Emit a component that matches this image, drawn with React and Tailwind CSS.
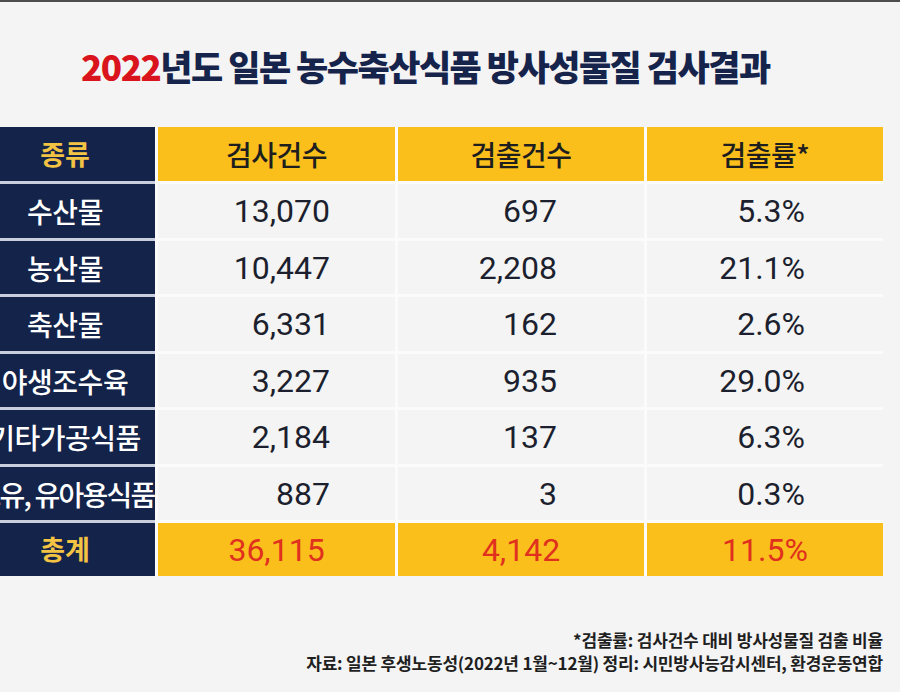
import React from "react";

const rows = [
  { name: "수산물", a: "13,070", b: "697", c: "5.3%", t: "tracking-[-0.5px]" },
  { name: "농산물", a: "10,447", b: "2,208", c: "21.1%", t: "tracking-[-0.5px]" },
  { name: "축산물", a: "6,331", b: "162", c: "2.6%", t: "tracking-[-0.5px]" },
  { name: "야생조수육", a: "3,227", b: "935", c: "29.0%", t: "tracking-[-0.5px]" },
  { name: "기타가공식품", a: "2,184", b: "137", c: "6.3%", t: "tracking-[-0.5px]" },
  { name: "모유, 유아용식품", a: "887", b: "3", c: "0.3%", t: "tracking-[-1.8px]" },
];

const heights = ["h-[54px]", "h-[54px]", "h-[53px]", "h-[54px]", "h-[53px]", "h-[54px]", "h-[53px]"];

const numCls = "font-['Roboto','Noto_Sans_CJK_KR',sans-serif] text-[32px] text-[#1c1f2e] bg-[#f4f4f4] flex items-center justify-end";

export default function App() {
  return (
    <div className="w-[900px] h-[692px] overflow-hidden bg-[#f4f4f4] border-t-2 border-[#4d4d4d] font-['Noto_Sans_CJK_KR','Noto_Sans',sans-serif]">
      <div className="pt-[44px] pl-[81px] h-[86px] text-[35px] leading-[40px] font-black text-[#16244c] tracking-[-1.5px] whitespace-nowrap">
        <span className="text-[#d9141d]">2022</span>년도 일본 농수축산식품 방사성물질 검사결과
      </div>

      <div className="mt-[39px] ml-[-25px] flex gap-[3px] bg-[#fbfbfb] w-[908px]">
        <div className="w-[180px] flex flex-col gap-[3px] bg-[#c9cedd]">
          <div className="h-[54px] bg-[#13234a] flex items-center justify-center text-[27px] font-bold text-[#f3c343]">
            종류
          </div>
          {rows.map((r, i) => (
            <div
              key={r.name}
              className={`${heights[i + 1]} ${r.t} bg-[#13234a] flex items-center justify-center text-[28px] font-medium text-white whitespace-nowrap`}
            >
              {r.name}
            </div>
          ))}
          <div className="h-[53px] bg-[#13234a] flex items-center justify-center text-[27px] font-bold text-[#f3c343]">
            총계
          </div>
        </div>

        <div className="grid grid-cols-[237px_246px_236px] gap-[3px]">
          {["검사건수", "검출건수", "검출률*"].map((h) => (
            <div
              key={h}
              className="h-[54px] bg-[#fbbf1c] flex items-center justify-center text-[28px] font-medium text-[#1e1e1e] tracking-[-0.5px]"
            >
              {h}
            </div>
          ))}
          {rows.map((r, i) => (
            <React.Fragment key={r.name}>
              <div className={`${heights[i + 1]} ${numCls} pr-[65px]`}>{r.a}</div>
              <div className={`${heights[i + 1]} ${numCls} pr-[87px]`}>{r.b}</div>
              <div className={`${heights[i + 1]} ${numCls} pr-[78px]`}>{r.c}</div>
            </React.Fragment>
          ))}
          {["36,115", "4,142", "11.5%"].map((t) => (
            <div
              key={t}
              className="h-[53px] bg-[#fbbf1c] flex items-center justify-center font-['Roboto','Noto_Sans_CJK_KR',sans-serif] text-[32px] text-[#e0301e]"
            >
              {t}
            </div>
          ))}
        </div>
      </div>

      <div className="mt-[52px] pr-[17px] flex flex-col items-end text-[17px] leading-[23px] font-bold text-[#1f1f1f] whitespace-nowrap tracking-[-0.2px]">
        <div>*검출률: 검사건수 대비 방사성물질 검출 비율</div>
        <div>자료: 일본 후생노동성(2022년 1월~12월) 정리: 시민방사능감시센터, 환경운동연합</div>
      </div>
    </div>
  );
}
